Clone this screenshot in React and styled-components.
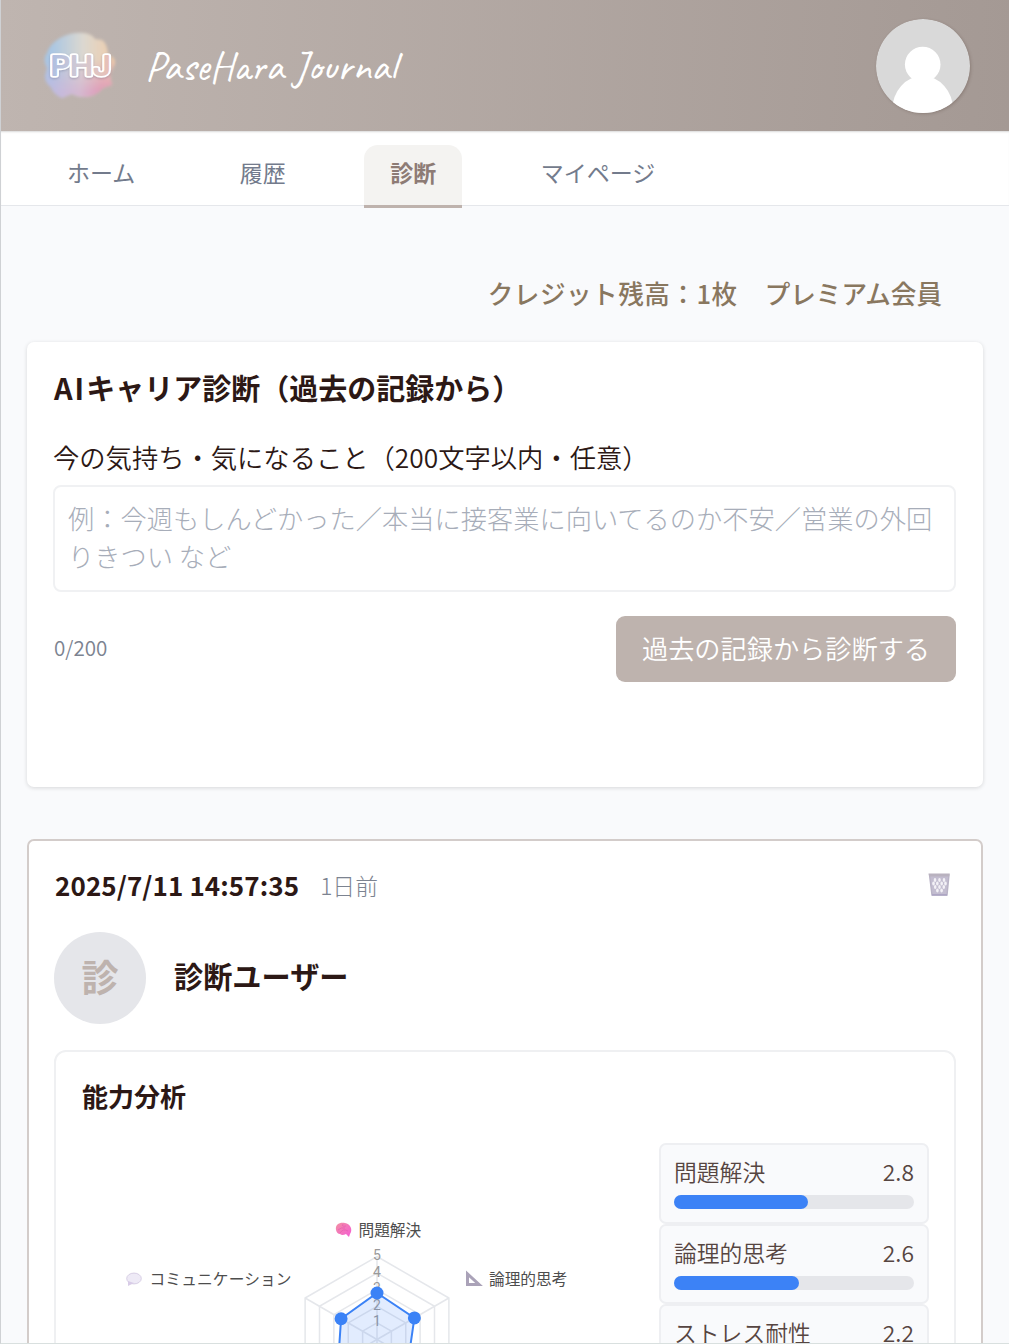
import React, { useState } from "react";
import styled, { createGlobalStyle } from "styled-components";

const GlobalStyle = createGlobalStyle`
  * {
    box-sizing: border-box;
  }

  body {
    margin: 0;
    overflow: hidden;
    background: #f9fafc;
    color: #2c1815;
    font-family: "Noto Sans CJK JP", sans-serif;
  }

  button, textarea {
    font-family: inherit;
  }
`;

const Page = styled.div`
  height: 1344px;
  overflow: hidden;
  border-left: 1px solid #cfd1d4;
  border-bottom: 1px solid #d9e0df;
  background: #f9fafc;
`;

const Header = styled.header`
  display: flex;
  align-items: center;
  height: 131px;
  padding: 0 39px 0 40px;
  background: linear-gradient(93deg, #bfb5b0 0%, #a49994 100%);
`;

const SiteTitle = styled.h1`
  flex: 1;
  margin: 2px 0 0 27px;
  color: white;
  font-family: Caveat, cursive;
  font-size: 42px;
  font-weight: 500;
  line-height: 44px;
`;

const Avatar = styled.svg`
  width: 94px;
  height: 94px;
  border-radius: 50%;
  box-shadow: 1px 1px 3px rgba(70, 50, 45, 0.25);
`;

const Nav = styled.nav`
  display: flex;
  align-items: flex-start;
  gap: 52.5px;
  height: 75px;
  padding: 14px 40px 0;
  background: white;
  border-bottom: 1px solid #e5e7eb;
  box-shadow: inset 0 2px 2px -1px rgba(0, 0, 0, 0.15);
`;

const NavItem = styled.a`
  height: 63px;
  padding: 0 26px;
  border-radius: 14px 14px 0 0;
  border-bottom: 3px solid ${({ $active }) => ($active ? "#beb2ad" : "transparent")};
  background: ${({ $active }) => ($active ? "#f4f3f1" : "transparent")};
  color: ${({ $active }) => ($active ? "#8d7b75" : "#737b8c")};
  font-size: 23px;
  font-weight: ${({ $active }) => ($active ? 700 : 400)};
  line-height: 55px;
  white-space: nowrap;
`;

const Credit = styled.p`
  display: flex;
  justify-content: flex-end;
  gap: 27px;
  margin: 68px 67px 31px 0;
  color: #89775f;
  font-size: 25.6px;
  font-weight: 500;
  line-height: 37px;

  span:first-child {
    letter-spacing: 0.5px;
  }
`;

const Card = styled.section`
  width: 956px;
  margin-left: 26px;
  padding: 26px;
  border-radius: 7px;
  background: white;
`;

const FormCard = styled(Card)`
  height: 445px;
  margin-bottom: 52px;
  padding-top: 24px;
  box-shadow: 0 1px 4px rgba(0, 0, 0, 0.14);
`;

const ResultCard = styled(Card)`
  padding: 22px 25px;
  border: 2px solid #d3ccca;
`;

const CardTitle = styled.h2`
  margin: 0 0 30px 1px;
  font-size: 29px;
  font-weight: 700;
  line-height: 42px;
`;

const Latin = styled.span`
  letter-spacing: 2px;
`;

const Label = styled.label`
  display: block;
  margin-bottom: 9px;
  font-size: 26.3px;
  font-weight: 350;
  line-height: 38px;
`;

const TextBox = styled.textarea`
  display: block;
  width: 903px;
  height: 107px;
  padding: 12px 11px 12px 13px;
  overflow: hidden;
  border: 2px solid #f0f1f3;
  border-radius: 8px;
  outline: none;
  resize: none;
  color: inherit;
  font-size: 26.24px;
  line-height: 38px;

  &::placeholder {
    color: #a7adb9;
    font-weight: 300;
    opacity: 1;
  }
`;

const FormFooter = styled.div`
  display: flex;
  justify-content: space-between;
  align-items: center;
  width: 903px;
  margin-top: 24px;
`;

const Counter = styled.span`
  margin: 0 0 4px 1px;
  color: #7c8390;
  font-size: 20.6px;
  font-weight: 350;
`;

const SubmitButton = styled.button`
  width: 340px;
  height: 66px;
  padding: 0 0 2px;
  border: 0;
  border-radius: 9px;
  background: #beb3ae;
  color: white;
  font-size: 26.2px;
  font-weight: 350;
  white-space: nowrap;
`;

const ResultHeader = styled.div`
  display: flex;
  align-items: center;
  height: 42px;
`;

const DateText = styled.time`
  margin-left: 1px;
  font-size: 26px;
  font-weight: 700;
  letter-spacing: 0.1px;
`;

const Ago = styled.span`
  flex: 1;
  margin-left: 21px;
  padding-top: 3px;
  color: #7c8390;
  font-size: 22.8px;
  font-weight: 300;
`;

const TrashIcon = styled.svg`
  width: 24px;
  height: 25px;
  margin: 1px 5px 0 0;
`;

const UserRow = styled.div`
  display: flex;
  align-items: center;
  gap: 27px;
  margin: 27px 0 26px;
`;

const Initial = styled.div`
  display: flex;
  justify-content: center;
  width: 92px;
  height: 92px;
  border-radius: 50%;
  background: #e5e6ea;
  color: #beb3ae;
  font-size: 37px;
  font-weight: 700;
  line-height: 88px;
`;

const UserName = styled.h3`
  margin: 0 0 6px 1px;
  font-size: 29.2px;
  font-weight: 700;
`;

const Analysis = styled.div`
  width: 902px;
  height: 500px;
  padding: 24px 26px;
  border: 2px solid #eff0f2;
  border-radius: 12px;
`;

const AnalysisTitle = styled.h3`
  margin: 0;
  font-size: 26px;
  font-weight: 700;
  line-height: 40px;
`;

const AnalysisBody = styled.div`
  display: flex;
  justify-content: space-between;
  margin-top: 27px;
`;

const Chart = styled.svg`
  flex: none;
  width: 540px;
  height: 390px;
  font-family: "Noto Sans CJK JP", sans-serif;
`;

const ScoreList = styled.div`
  width: 270px;
  margin-right: -1px;
`;

const ScoreBox = styled.div`
  height: 80.6px;
  padding: 10px 13px;
  border: 2px solid #eeeff2;
  border-radius: 7px;
  background: #f9fafc;
`;

const ScoreText = styled.div`
  display: flex;
  justify-content: space-between;
  color: #564541;
  font-size: 22.8px;
  font-weight: 350;
  line-height: 34px;
`;

const Track = styled.div`
  height: 14px;
  margin-top: 6px;
  border-radius: 7px;
  background: #e5e6ea;
`;

const Fill = styled.div`
  height: 100%;
  border-radius: 7px;
  background: #3c82f6;
`;

const scores = [
  { label: "問題解決", value: 2.8 },
  { label: "論理的思考", value: 2.6 },
  { label: "ストレス耐性", value: 2.2 },
];

const radarValues = [2.8, 2.6, 2.2, 2.5, 2.7, 2.5];
const CENTER_X = 295;
const CENTER_Y = 196.5;
const STEP = 16.6;

const radarPoint = (value, i) => {
  const angle = (Math.PI / 3) * i - Math.PI / 2;
  return [
    CENTER_X + Math.cos(angle) * value * STEP,
    CENTER_Y + Math.sin(angle) * value * STEP,
  ];
};

const polygon = (values) =>
  values.map((value, i) => radarPoint(value, i).join(",")).join(" ");

const cloud =
  "M19 9 Q30 3 43 4 Q51 5 54 10 L61 11 Q66 14 67 25 Q75 29 74 35 Q71 40 69 46 L71 56 L62 59 Q55 68 43 68 Q36 68 31 65 L21 69 Q12 65 10 58 Q4 54 4 47 L6 39 Q1 30 6 24 Q8 16 19 9Z";

const Logo = () => (
  <svg width="77" height="74" viewBox="0 0 77 74">
    <defs>
      <linearGradient id="sky" x1="0" y1="0" x2="1" y2="0">
        <stop offset="0.1" stopColor="#a9c6e3" />
        <stop offset="0.55" stopColor="#dcd8d0" />
        <stop offset="1" stopColor="#f0cca9" />
      </linearGradient>
      <linearGradient id="rose" x1="0" y1="0" x2="1" y2="0">
        <stop offset="0" stopColor="#b9bae4" />
        <stop offset="0.5" stopColor="#d5b9d0" />
        <stop offset="0.8" stopColor="#df9ab7" />
      </linearGradient>
      <linearGradient id="fade" x1="0" y1="0" x2="0" y2="1">
        <stop offset="0.4" stopColor="#fff" stopOpacity="0" />
        <stop offset="0.85" stopColor="#fff" />
      </linearGradient>
      <linearGradient id="inner" x1="0" y1="0" x2="1" y2="0">
        <stop offset="0" stopColor="#adbfe2" />
        <stop offset="0.5" stopColor="#d3c9d2" />
        <stop offset="1" stopColor="#e9bfb4" />
      </linearGradient>
      <mask id="lower">
        <rect width="77" height="74" fill="url(#fade)" />
      </mask>
      <filter id="soft">
        <feGaussianBlur stdDeviation="1.4" />
      </filter>
    </defs>
    <g filter="url(#soft)">
      <path d={cloud} fill="url(#sky)" />
      <path d={cloud} fill="url(#rose)" mask="url(#lower)" />
    </g>
    <g fontFamily="Inter" fontWeight="300" fontSize="25" strokeLinejoin="round" strokeLinecap="round">
      <text
        x="9.5" y="46" textLength="60" lengthAdjust="spacingAndGlyphs"
        fill="white" stroke="white" strokeWidth="5.4"
        style={{ filter: "drop-shadow(0 1px 1px rgba(80,80,110,.3))" }}
      >
        PHJ
      </text>
      <text
        x="9.5" y="46" textLength="60" lengthAdjust="spacingAndGlyphs"
        fill="url(#inner)" stroke="url(#inner)" strokeWidth="1.9" aria-hidden="true"
      >
        PHJ
      </text>
    </g>
  </svg>
);

const Trash = () => (
  <TrashIcon viewBox="0 0 24 25">
    <path d="M2.5 3 L5 23 H20 L22 3Z" fill="#c3bdd0" stroke="#b9b3c6" strokeWidth="1.4" />
    <g fill="#f3f1f6">
      {[
        [8, 8], [12.5, 8], [17, 8],
        [6.5, 11.5], [10.3, 11.5], [14.7, 11.5], [18.5, 11.5],
        [8.2, 15], [12.5, 15], [16.8, 15],
        [10.4, 18.5], [14.6, 18.5],
      ].map(([x, y]) => (
        <ellipse key={`${x}-${y}`} cx={x} cy={y} rx="1.3" ry="2" />
      ))}
    </g>
    <path d="M1.5 1.5 H22.8 L22 4.5 H2.3Z" fill="#b9b2bf" />
    <path d="M5 22 H20 L20 23.7 H5Z" fill="#aea6c4" />
  </TrashIcon>
);

const RadarChart = () => (
  <Chart viewBox="0 0 540 390">
    <defs>
      <linearGradient id="brain" x1="0" y1="0" x2="1" y2="1">
        <stop stopColor="#f291a4" />
        <stop offset="1" stopColor="#f55bd4" />
      </linearGradient>
    </defs>
    <g fill="none" stroke="#e5e7eb" strokeWidth="1.5">
      {[1, 2, 3, 4, 5].map((level) => (
        <polygon key={level} points={polygon(Array(6).fill(level))} />
      ))}
      {radarValues.map((_, i) => {
        const [x, y] = radarPoint(5, i);
        return <line key={i} x1={CENTER_X} y1={CENTER_Y} x2={x} y2={y} />;
      })}
    </g>
    <g fill="#999" fontFamily="Roboto" fontSize="14" textAnchor="middle">
      {[1, 2, 3, 4, 5].map((level) => (
        <text key={level} x={CENTER_X} y={CENTER_Y - level * STEP + 3.5}>{level}</text>
      ))}
    </g>
    <polygon points={polygon(radarValues)} fill="#3b82f6" fillOpacity="0.15" stroke="#3b82f6" strokeWidth="2" />
    {radarValues.map((value, i) => {
      const [x, y] = radarPoint(value, i);
      return <circle key={i} cx={x} cy={y} r="6.5" fill="#3b82f6" />;
    })}
    <g fill="#4d4d4d" fontSize="15.7">
      <text x="276.5" y="92.5">問題解決</text>
      <text x="407" y="142">論理的思考</text>
      <text x="67.5" y="142" textLength="142">コミュニケーション</text>
    </g>
    <path d="M254 87 C253 81 258 79 263 80 C268 81 270 85 269 89 L268 91 L267 94 L264 91 Q260 93 258 91 Q255 91 254 87Z" fill="url(#brain)" />
    <path d="M256 87 Q259 84 263 85 M258 90 Q261 85 266 88 M261 81 Q259 84 264 83" fill="none" stroke="#e255b0" strokeWidth="0.6" />
    <ellipse cx="52" cy="135.5" rx="7.3" ry="5.4" fill="#eeeaf6" stroke="#d8cfe5" />
    <path d="M46 138 V143 L52 140Z" fill="#d8cce7" />
    <path d="M385.5 131 V141.5 H397Z" fill="white" stroke="#aaa2b8" strokeWidth="3" />
  </Chart>
);

const App = () => {
  const [text, setText] = useState("");

  return (
    <Page>
      <GlobalStyle />
      <Header>
        <Logo />
        <SiteTitle>PaseHara Journal</SiteTitle>
        <Avatar viewBox="0 0 94 94">
          <circle cx="47" cy="47" r="47" fill="#d9d9d9" />
          <circle cx="46.7" cy="45.5" r="17.8" fill="white" />
          <ellipse cx="46.7" cy="91" rx="30.5" ry="34" fill="white" />
        </Avatar>
      </Header>
      <Nav>
        <NavItem>ホーム</NavItem>
        <NavItem>履歴</NavItem>
        <NavItem $active>診断</NavItem>
        <NavItem>マイページ</NavItem>
      </Nav>
      <Credit>
        <span>クレジット残高：1枚</span>
        <span>プレミアム会員</span>
      </Credit>

      <FormCard>
        <CardTitle>
          <Latin>AI</Latin>キャリア診断（過去の記録から）
        </CardTitle>
        <Label htmlFor="feeling">今の気持ち・気になること（200文字以内・任意）</Label>
        <TextBox
          id="feeling"
          maxLength={200}
          value={text}
          onChange={(e) => setText(e.target.value)}
          placeholder="例：今週もしんどかった／本当に接客業に向いてるのか不安／営業の外回りきつい など"
        />
        <FormFooter>
          <Counter>{text.length}/200</Counter>
          <SubmitButton>過去の記録から診断する</SubmitButton>
        </FormFooter>
      </FormCard>

      <ResultCard>
        <ResultHeader>
          <DateText>2025/7/11 14:57:35</DateText>
          <Ago>1日前</Ago>
          <Trash />
        </ResultHeader>
        <UserRow>
          <Initial>診</Initial>
          <UserName>診断ユーザー</UserName>
        </UserRow>
        <Analysis>
          <AnalysisTitle>能力分析</AnalysisTitle>
          <AnalysisBody>
            <RadarChart />
            <ScoreList>
              {scores.map(({ label, value }) => (
                <ScoreBox key={label}>
                  <ScoreText>
                    <span>{label}</span>
                    <span>{value}</span>
                  </ScoreText>
                  <Track>
                    <Fill style={{ width: `${value * 20}%` }} />
                  </Track>
                </ScoreBox>
              ))}
            </ScoreList>
          </AnalysisBody>
        </Analysis>
      </ResultCard>
    </Page>
  );
};

export default App;
